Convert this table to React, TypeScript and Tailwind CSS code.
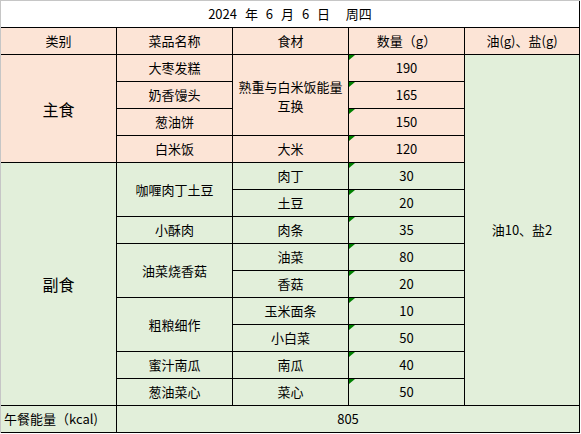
type Cell = {
  text: string;
  span?: string;
  bg: "pink" | "green" | "white";
  mark?: boolean;
  big?: boolean;
  left?: boolean;
  title?: boolean;
};

const BG = {
  pink: "bg-[#fce4d6]",
  green: "bg-[#e2efda]",
  white: "bg-white",
};

const cells: Cell[] = [
  { text: "2024 年 6 月 6 日  周四", span: "col-span-5", bg: "white", title: true },

  { text: "类别", bg: "pink" },
  { text: "菜品名称", bg: "pink" },
  { text: "食材", bg: "pink" },
  { text: "数量（g）", bg: "pink" },
  { text: "油(g)、盐(g)", bg: "pink" },

  { text: "主食", span: "row-span-4", bg: "pink", big: true },
  { text: "大枣发糕", bg: "pink" },
  { text: "熟重与白米饭能量互换", span: "row-span-3", bg: "pink" },
  { text: "190", bg: "pink", mark: true },
  { text: "油10、盐2", span: "row-span-13", bg: "green" },
  { text: "奶香馒头", bg: "pink" },
  { text: "165", bg: "pink", mark: true },
  { text: "葱油饼", bg: "pink" },
  { text: "150", bg: "pink", mark: true },
  { text: "白米饭", bg: "pink" },
  { text: "大米", bg: "pink" },
  { text: "120", bg: "pink", mark: true },

  { text: "副食", span: "row-span-9", bg: "green", big: true },
  { text: "咖喱肉丁土豆", span: "row-span-2", bg: "green" },
  { text: "肉丁", bg: "green" },
  { text: "30", bg: "green", mark: true },
  { text: "土豆", bg: "green" },
  { text: "20", bg: "green", mark: true },
  { text: "小酥肉", bg: "green" },
  { text: "肉条", bg: "green" },
  { text: "35", bg: "green", mark: true },
  { text: "油菜烧香菇", span: "row-span-2", bg: "green" },
  { text: "油菜", bg: "green" },
  { text: "80", bg: "green", mark: true },
  { text: "香菇", bg: "green" },
  { text: "20", bg: "green", mark: true },
  { text: "粗粮细作", span: "row-span-2", bg: "green" },
  { text: "玉米面条", bg: "green" },
  { text: "10", bg: "green", mark: true },
  { text: "小白菜", bg: "green" },
  { text: "50", bg: "green", mark: true },
  { text: "蜜汁南瓜", bg: "green" },
  { text: "南瓜", bg: "green" },
  { text: "40", bg: "green", mark: true },
  { text: "葱油菜心", bg: "green" },
  { text: "菜心", bg: "green" },
  { text: "50", bg: "green", mark: true },

  { text: "午餐能量（kcal)", bg: "green", left: true },
  { text: "805", span: "col-span-4", bg: "green" },
];

export default function App() {
  return (
    <div className="w-[581px] h-[434px] bg-white font-['Noto_Sans_CJK_SC',sans-serif] text-[13px] text-black">
      <div className="grid grid-cols-[116px_116px_116px_116px_115px] auto-rows-[27px] w-[580px] border-t border-l border-[#c6c6c6]">
        {cells.map((c, i) => (
          <div
            key={i}
            className={`relative flex items-center border-r border-b border-black whitespace-pre-wrap leading-[16px] ${
              c.left ? "justify-start pl-[3px]" : "justify-center text-center px-1"
            } ${c.big ? "text-[16px]" : ""} ${c.title ? "[word-spacing:5px] pl-1" : ""} ${BG[c.bg]} ${c.span ?? ""}`}
          >
            {c.mark && (
              <span className="absolute left-0 top-0 w-[6px] h-[5px] bg-[#008000] [clip-path:polygon(0_0,100%_0,0_100%)]" />
            )}
            {c.text === "熟重与白米饭能量互换" ? (
              <span className="flex flex-col items-center leading-[19px] mt-[2px]">
                <span>熟重与白米饭能量</span>
                <span>互换</span>
              </span>
            ) : (
              c.text
            )}
          </div>
        ))}
      </div>
    </div>
  );
}
